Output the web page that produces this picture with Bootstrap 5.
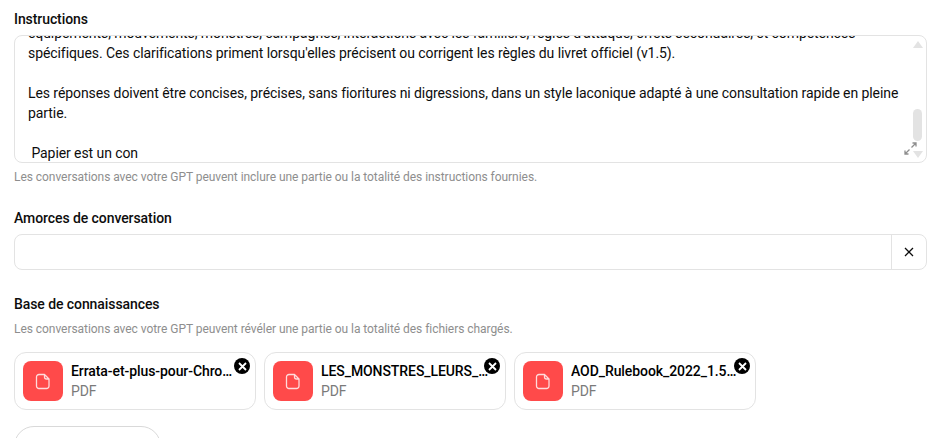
<!DOCTYPE html>
<html lang="fr">
<head>
<meta charset="utf-8">
<title>Configurer le GPT</title>
<link rel="stylesheet" href="https://cdn.jsdelivr.net/npm/bootstrap@5.3.0/dist/css/bootstrap.min.css">
<style>
  html, body { height: 438px; overflow: hidden; background: #fff; }
  body { font-family: "Roboto", "Noto Sans", sans-serif; font-size: 14px; line-height: 20px; color: #0d0d0d; letter-spacing: -0.08px; }
  .page-wrap { padding: 9px 0 0 14px; height: 438px; overflow: hidden; }
  .field-label { font-weight: 500; font-size: 14px; line-height: 20px; margin-bottom: 6px; }
  .field-help { font-size: 12px; line-height: 16px; color: #8e8e8e; letter-spacing: -0.05px; }
  .instr-box { height: 128px; border: 1px solid #e3e3e3; border-radius: 8px; overflow: hidden; margin-bottom: 6px; }
  .instr-text { margin-top: -13px; padding: 0 13px; white-space: nowrap; }
  .fake-scroll { position: absolute; top: 0; right: 0; bottom: 0; width: 16px; }
  .scroll-up, .scroll-down { position: absolute; left: 3px; width: 0; height: 0; border-left: 5px solid transparent; border-right: 5px solid transparent; }
  .scroll-up { top: 5px; border-bottom: 7px solid #e3e3e3; }
  .scroll-down { bottom: 4px; border-top: 7px solid #e3e3e3; }
  .scroll-thumb { position: absolute; left: 3px; top: 73px; width: 9px; height: 32px; border-radius: 5px; background: #e3e3e3; }
  .resize-mark { position: absolute; right: 9px; bottom: 7px; width: 13px; height: 13px; }
  .starter-row { height: 36px; border: 1px solid #e3e3e3; border-radius: 8px; }
  .starter-x { width: 35px; border-left: 1px solid #e3e3e3; }
  .chip-list { margin-top: 15px; }
  .chip-box { width: 242px; height: 58px; border: 1px solid #e3e3e3; border-radius: 12px; padding: 8px; }
  .chip-icon { width: 40px; height: 40px; border-radius: 8px; background: #ff4a4a; flex: none; }
  .chip-name { font-weight: 500; width: 168px; overflow: hidden; text-overflow: ellipsis; white-space: nowrap; line-height: 20px; color: #000; }
  .chip-type { color: #7a7a7a; line-height: 20px; }
  .chip-close { position: absolute; top: 5px; right: 5px; width: 16px; height: 16px; border-radius: 50%; background: #000; }
  .upload-btn { width: 147px; height: 40px; border: 1px solid #d9d9d9; border-radius: 20px; background: #fff; font-size: 14px; font-weight: 500; padding: 0; }
  .title-gap { margin-top: 23px; }
  .title-gap-2 { margin-top: 24px; margin-bottom: 7px; }
</style>
</head>
<body>
<div class="page-wrap">
  <div class="field-label">Instructions</div>
  <div class="instr-box position-relative">
    <div class="instr-text">
      équipements, mouvements, monstres, campagnes, interactions avec les familiers, règles d'attaque, effets secondaires, et compétences<br>
      spécifiques. Ces clarifications priment lorsqu'elles précisent ou corrigent les règles du livret officiel (v1.5).<br>
      <br>
      Les réponses doivent être concises, précises, sans fioritures ni digressions, dans un style laconique adapté à une consultation rapide en pleine<br>
      partie.<br>
      <br>
      &nbsp;Papier est un con
    </div>
    <div class="fake-scroll">
      <div class="scroll-up"></div>
      <div class="scroll-thumb"></div>
      <div class="scroll-down"></div>
    </div>
    <svg class="resize-mark" viewBox="0 0 13 13" fill="none" stroke="#8e8e8e" stroke-width="1.300">
      <path d="M7.500 5.500 12 1M8.500 1H12V4.500M5.500 7.500 1 12M1 8.500V12H4.500"/>
    </svg>
  </div>
  <div class="field-help">Les conversations avec votre GPT peuvent inclure une partie ou la totalité des instructions fournies.</div>

  <div class="field-label title-gap">Amorces de conversation</div>
  <div class="starter-row d-flex">
    <div class="flex-grow-1"></div>
    <div class="starter-x d-flex align-items-center justify-content-center">
      <svg width="10" height="10" viewBox="0 0 10 10" stroke="#0d0d0d" stroke-width="1.300"><path d="M1 1 9 9M9 1 1 9"/></svg>
    </div>
  </div>

  <div class="field-label title-gap-2">Base de connaissances</div>
  <div class="field-help">Les conversations avec votre GPT peuvent révéler une partie ou la totalité des fichiers chargés.</div>

  <div class="d-flex gap-2 chip-list">
    <div class="chip-box d-flex gap-2 position-relative">
      <div class="chip-icon d-flex align-items-center justify-content-center">
        <svg width="16" height="17" viewBox="0 0 16 17" fill="none" stroke="#fff" stroke-opacity=".8" stroke-width="1.300" stroke-linejoin="round"><path d="M4 1.500H9.500L14 6V13A2.500 2.500 0 0 1 11.500 15.500H4A2.500 2.500 0 0 1 1.500 13V4A2.500 2.500 0 0 1 4 1.500ZM9.500 1.500V4A2 2 0 0 0 11.500 6H14"/></svg>
      </div>
      <div>
        <div class="chip-name">Errata-et-plus-pour-Chronopia.pdf</div>
        <div class="chip-type">PDF</div>
      </div>
      <div class="chip-close d-flex align-items-center justify-content-center">
        <svg width="9" height="9" viewBox="0 0 9 9" stroke="#fff" stroke-width="1.800"><path d="M1 1 8 8M8 1 1 8"/></svg>
      </div>
    </div>
    <div class="chip-box d-flex gap-2 position-relative">
      <div class="chip-icon d-flex align-items-center justify-content-center">
        <svg width="16" height="17" viewBox="0 0 16 17" fill="none" stroke="#fff" stroke-opacity=".8" stroke-width="1.300" stroke-linejoin="round"><path d="M4 1.500H9.500L14 6V13A2.500 2.500 0 0 1 11.500 15.500H4A2.500 2.500 0 0 1 1.500 13V4A2.500 2.500 0 0 1 4 1.500ZM9.500 1.500V4A2 2 0 0 0 11.500 6H14"/></svg>
      </div>
      <div>
        <div class="chip-name">LES_MONSTRES_LEURS_CAPACITES.pdf</div>
        <div class="chip-type">PDF</div>
      </div>
      <div class="chip-close d-flex align-items-center justify-content-center">
        <svg width="9" height="9" viewBox="0 0 9 9" stroke="#fff" stroke-width="1.800"><path d="M1 1 8 8M8 1 1 8"/></svg>
      </div>
    </div>
    <div class="chip-box d-flex gap-2 position-relative">
      <div class="chip-icon d-flex align-items-center justify-content-center">
        <svg width="16" height="17" viewBox="0 0 16 17" fill="none" stroke="#fff" stroke-opacity=".8" stroke-width="1.300" stroke-linejoin="round"><path d="M4 1.500H9.500L14 6V13A2.500 2.500 0 0 1 11.500 15.500H4A2.500 2.500 0 0 1 1.500 13V4A2.500 2.500 0 0 1 4 1.500ZM9.500 1.500V4A2 2 0 0 0 11.500 6H14"/></svg>
      </div>
      <div>
        <div class="chip-name">AOD_Rulebook_2022_1.5_FR.pdf</div>
        <div class="chip-type">PDF</div>
      </div>
      <div class="chip-close d-flex align-items-center justify-content-center">
        <svg width="9" height="9" viewBox="0 0 9 9" stroke="#fff" stroke-width="1.800"><path d="M1 1 8 8M8 1 1 8"/></svg>
      </div>
    </div>
  </div>
  <button type="button" class="upload-btn mt-3">Charger des fichiers</button>
</div>
</body>
</html>
